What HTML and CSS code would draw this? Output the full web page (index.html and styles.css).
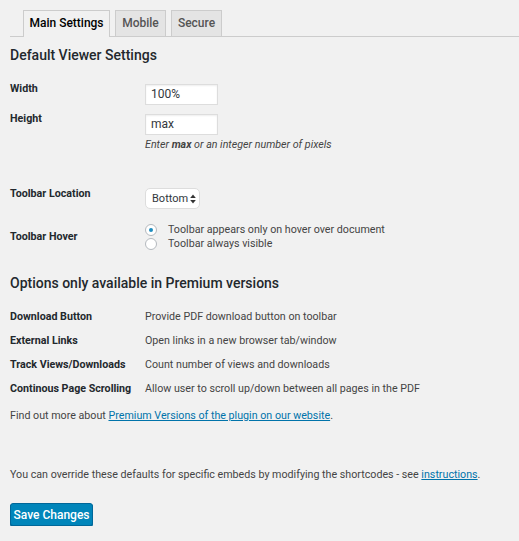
FILE: index.html
```html
<!DOCTYPE html>
<html>
<head>
<meta charset="utf-8">
<link rel="stylesheet" href="styles.css">
</head>
<body>
<div class="wrap">
  <nav class="tabs">
    <a class="tab active tab-main">Main Settings</a>
    <a class="tab tab-small">Mobile</a>
    <a class="tab tab-small">Secure</a>
  </nav>

  <h2 class="section-title first">Default Viewer Settings</h2>

  <div class="form">
    <div class="row row-width">
      <div class="label">Width</div>
      <div class="field"><div class="input">100%</div></div>
    </div>
    <div class="row row-height">
      <div class="label">Height</div>
      <div class="field">
        <div class="input">max</div>
        <p class="desc">Enter <b>max</b> or an integer number of pixels</p>
      </div>
    </div>
    <div class="row row-location">
      <div class="label">Toolbar Location</div>
      <div class="field">
        <div class="select"><span>Bottom</span>
          <svg class="arrows" width="6" height="10" viewBox="0 0 6 10"><path d="M3 0.5 L5.8 4 H0.2 Z" fill="#333"/><path d="M3 9.5 L5.8 6 H0.2 Z" fill="#333"/></svg>
        </div>
      </div>
    </div>
    <div class="row row-hover">
      <div class="label">Toolbar Hover</div>
      <div class="field radios">
        <label class="radio"><span class="dot checked"></span>Toolbar appears only on hover over document</label>
        <label class="radio"><span class="dot"></span>Toolbar always visible</label>
      </div>
    </div>
  </div>

  <h2 class="section-title second">Options only available in Premium versions</h2>

  <div class="premium">
    <div class="prow"><div class="label">Download Button</div><div>Provide PDF download button on toolbar</div></div>
    <div class="prow"><div class="label">External Links</div><div>Open links in a new browser tab/window</div></div>
    <div class="prow"><div class="label">Track Views/Downloads</div><div>Count number of views and downloads</div></div>
    <div class="prow"><div class="label">Continous Page Scrolling</div><div>Allow user to scroll up/down between all pages in the PDF</div></div>
  </div>

  <p class="more">Find out more about <a href="#">Premium Versions of the plugin on our website</a>.</p>

  <p class="override">You can override these defaults for specific embeds by modifying the shortcodes - see <a href="#">instructions</a>.</p>

  <button class="save">Save Changes</button>
</div>
</body>
</html>
```

FILE: styles.css
```css
html, body {
  margin: 0;
  padding: 0;
  background: #f1f1f1;
}
body {
  font-family: "Roboto", "Liberation Sans", sans-serif;
  font-size: 10.7px;
  color: #444;
}
.wrap {
  padding: 0 0 0 10px;
}
.tabs {
  display: flex;
  gap: 5px;
  margin-top: 10px;
  padding-left: 13px;
  height: 26px;
  align-items: flex-end;
  border-bottom: 1px solid #ccc;
}
.tab {
  box-sizing: border-box;
  height: 26px;
  line-height: 25px;
  text-align: center;
  border: 1px solid #ccc;
  border-bottom: none;
  background: #e4e4e4;
  color: #555;
  font-weight: 500;
  font-size: 12px;
}
.tab-main { width: 87px; }
.tab-small { width: 51px; }
.tab.active {
  background: #f1f1f1;
  color: #000;
  height: 27px;
  margin-bottom: -1px;
}
.section-title {
  font-size: 14px;
  font-weight: 500;
  color: #23282d;
  margin: 0;
  line-height: 20px;
}
.section-title.first { margin-top: 8px; }
.section-title.second { margin-top: 22px; }

.form { margin-top: 17px; }
.row {
  display: grid;
  grid-template-columns: 135px 1fr;
}
.label {
  font-weight: 700;
  color: #23282d;
  line-height: 14px;
}
.row-width { height: 30px; }
.row-height { height: 75px; }
.row-location { height: 36px; }
.input {
  box-sizing: border-box;
  margin-top: 2px;
  width: 73px;
  height: 21px;
  background: #fff;
  border: 1px solid #ddd;
  box-shadow: inset 0 1px 2px rgba(0,0,0,.07);
  padding: 0 5px;
  line-height: 19px;
  font-size: 12px;
  color: #32373c;
}
.desc {
  margin: 2px 0 0;
  font-style: italic;
  line-height: 16px;
  color: #444;
}
.desc b { font-weight: 700; }
.select {
  box-sizing: border-box;
  margin-top: 1px;
  width: 55px;
  height: 21px;
  background: #fff;
  border: 1px solid #ddd;
  border-radius: 5px;
  display: flex;
  align-items: center;
  justify-content: space-between;
  padding: 0 3px 0 6px;
  font-size: 11px;
  color: #32373c;
}
.row-hover .label { margin-top: 7px; }
.radios {
  display: flex;
  flex-direction: column;
}
.radio {
  display: flex;
  align-items: center;
  height: 14px;
  line-height: 14px;
}
.dot {
  box-sizing: border-box;
  width: 12px;
  height: 12px;
  border-radius: 50%;
  border: 1px solid #b4b9be;
  background: #fff;
  margin-right: 11px;
  display: inline-flex;
  align-items: center;
  justify-content: center;
}
.dot.checked::after {
  content: "";
  width: 4px;
  height: 4px;
  border-radius: 50%;
  background: #1e8cbe;
}

.premium { margin-top: 17px; }
.prow {
  display: grid;
  grid-template-columns: 135px 1fr;
  height: 24px;
  line-height: 14px;
}
a { color: #0073aa; }
.more {
  margin: 3px 0 0;
  line-height: 14px;
}
.override {
  margin: 45px 0 0;
  line-height: 14px;
}
.save {
  display: block;
  margin-top: 21px;
  box-sizing: border-box;
  height: 23px;
  width: 83px;
  padding: 0;
  background: #0085ba;
  border: 1px solid #006799;
  border-radius: 3px;
  box-shadow: 0 1px 0 #006799;
  color: #fff;
  font-family: inherit;
  font-weight: 500;
  font-size: 12px;
}
```
